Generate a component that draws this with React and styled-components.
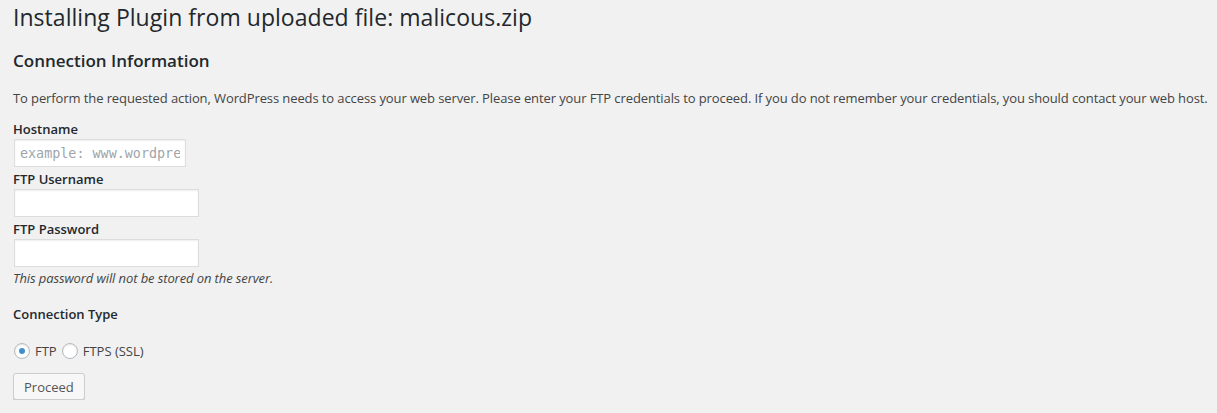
import React from "react";
import styled, { createGlobalStyle } from "styled-components";

const GlobalStyle = createGlobalStyle`
  html, body {
    margin: 0;
    padding: 0;
    background: #f1f1f1;
  }
  body {
    font-family: "Open Sans", "Liberation Sans", sans-serif;
    font-size: 13px;
    color: #444;
  }
`;

const Wrap = styled.div`
  padding: 3px 13px 0 13px;
  display: flex;
  flex-direction: column;
  align-items: flex-start;
`;

const Title = styled.h1`
  margin: 0;
  font-size: 23px;
  font-weight: 400;
  line-height: 29px;
  letter-spacing: 0.04px;
  color: #23282d;
`;

const SectionTitle = styled.h3`
  margin: 17px 0 0;
  font-size: 17px;
  font-weight: 600;
  line-height: 23px;
  color: #23282d;
`;

const Intro = styled.p`
  margin: 16px 0 0;
  font-size: 13px;
  line-height: 20px;
  letter-spacing: -0.1px;
  white-space: nowrap;
  color: #444;
`;

const Field = styled.div`
  display: flex;
  flex-direction: column;
  align-items: flex-start;
  margin-top: ${(p) => p.gap || 0}px;
`;

const Label = styled.label`
  display: block;
  font-size: 13px;
  font-weight: 600;
  line-height: 20px;
  color: #23282d;
`;

const Input = styled.input`
  box-sizing: border-box;
  width: ${(p) => p.w}px;
  height: 28px;
  margin: 0 0 2px 1px;
  padding: 3px 5px;
  border: 1px solid #ddd;
  background: #fff;
  box-shadow: inset 0 1px 2px rgba(0, 0, 0, 0.07);
  font-family: ${(p) =>
    p.code ? '"DejaVu Sans Mono", "Liberation Mono", monospace' : '"Open Sans", sans-serif'};
  font-size: ${(p) => (p.code ? "13.4px" : "13px")};
  color: #32373c;
  outline: none;

  &::placeholder {
    color: #a0a5aa;
  }
`;

const Hint = styled.p`
  margin: -1px 0 0;
  font-size: 13px;
  font-style: italic;
  line-height: 21px;
  letter-spacing: -0.1px;
  color: #444;
`;

const TypeTitle = styled.div`
  margin-top: 15px;
  font-size: 13px;
  font-weight: 600;
  line-height: 21px;
  color: #23282d;
`;

const RadioRow = styled.div`
  display: flex;
  align-items: center;
  margin-top: 16px;
  height: 20px;
`;

const RadioLabel = styled.label`
  display: flex;
  align-items: center;
  font-size: 13px;
  line-height: 20px;
  color: #444;
  margin-right: 4px;
`;

const RadioCircle = styled.span`
  box-sizing: border-box;
  width: 16px;
  height: 16px;
  margin: 0 5px 0 1px;
  border-radius: 50%;
  border: 1px solid #b4b9be;
  background: #fff;
  box-shadow: inset 0 1px 2px rgba(0, 0, 0, 0.1);
  display: flex;
  align-items: center;
  justify-content: center;

  &::after {
    content: "";
    display: ${(p) => (p.checked ? "block" : "none")};
    width: 6px;
    height: 6px;
    border-radius: 50%;
    background: #3f8fcb;
  }
`;

const Button = styled.button`
  margin-top: 12px;
  box-sizing: border-box;
  height: 27px;
  padding: 0 10px 1px;
  font-family: "Open Sans", sans-serif;
  font-size: 13px;
  line-height: 26px;
  color: #555;
  background: #f7f7f7;
  border: 1px solid #ccc;
  border-radius: 3px;
  box-shadow: 0 1px 0 #ccc;
  cursor: pointer;
`;

export default function App() {
  return (
    <>
      <GlobalStyle />
      <Wrap>
        <Title>Installing Plugin from uploaded file: malicous.zip</Title>
        <SectionTitle>Connection Information</SectionTitle>
        <Intro>
          To perform the requested action, WordPress needs to access your web
          server. Please enter your FTP credentials to proceed. If you do not
          remember your credentials, you should contact your web host.
        </Intro>
        <Field gap={11}>
          <Label>Hostname</Label>
          <Input w={172} code placeholder="example: www.wordpress.org" />
        </Field>
        <Field>
          <Label>FTP Username</Label>
          <Input w={185} />
        </Field>
        <Field>
          <Label>FTP Password</Label>
          <Input w={185} type="password" />
        </Field>
        <Hint>This password will not be stored on the server.</Hint>
        <TypeTitle>Connection Type</TypeTitle>
        <RadioRow>
          <RadioLabel>
            <RadioCircle checked />
            FTP
          </RadioLabel>
          <RadioLabel>
            <RadioCircle />
            FTPS (SSL)
          </RadioLabel>
        </RadioRow>
        <Button>Proceed</Button>
      </Wrap>
    </>
  );
}
